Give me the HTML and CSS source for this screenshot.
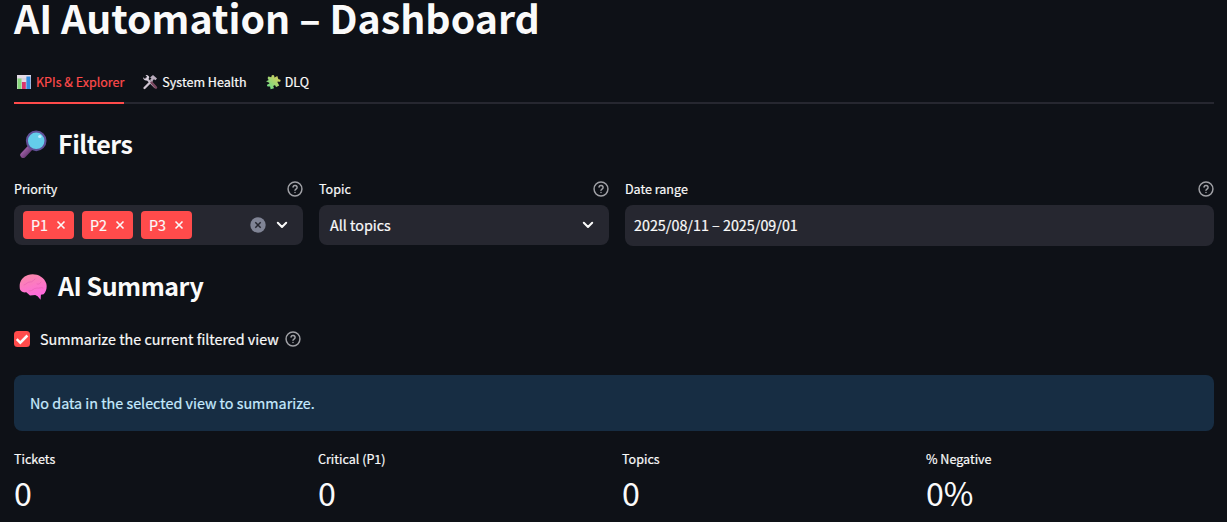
FILE: index.html
```html
<!DOCTYPE html>
<html lang="en">
<head>
<meta charset="utf-8">
<title>AI Automation – Dashboard</title>
<link rel="stylesheet" href="styles.css">
</head>
<body>
<svg width="0" height="0" class="defs">
  <defs>
    <linearGradient id="brain" x1="0" y1="0" x2="0.3" y2="1"><stop offset="0" stop-color="#f98ba5"/><stop offset="1" stop-color="#ff68e0"/></linearGradient>
    <linearGradient id="puzzle" x1="1" y1="0" x2="0" y2="1"><stop offset="0" stop-color="#e8cf58"/><stop offset="1" stop-color="#5edc8b"/></linearGradient>
    <linearGradient id="handle" x1="0" y1="0" x2="1" y2="1"><stop offset="0" stop-color="#a868b0"/><stop offset="1" stop-color="#60346c"/></linearGradient>
    <symbol id="help" viewBox="0 0 24 24"><g fill="none" stroke="currentColor" stroke-width="2.2" stroke-linecap="round" stroke-linejoin="round"><circle cx="12" cy="12" r="10.4"/><path d="M9 9a3.1 3.1 0 0 1 6.1 1c0 2-3 2.2-3.1 4M12 17.4h.01"/></g></symbol>
    <symbol id="chevron" viewBox="0 0 12 8"><path d="M1.8 1.8 6 6l4.2-4.2" fill="none" stroke="#fafafa" stroke-width="2" stroke-linecap="round" stroke-linejoin="round"/></symbol>
    <symbol id="cross" viewBox="0 0 10 10"><path d="M1.5 1.5l7 7M8.5 1.5l-7 7" fill="none" stroke="currentColor" stroke-width="1.6"/></symbol>
  </defs>
</svg>
<main class="page">
  <h1 class="title">AI Automation – Dashboard</h1>
  <nav class="tabs">
    <a class="tab active">
      <svg class="emoji" viewBox="0 0 16 16"><path fill="#e4dbe8" d="M1 1h14v14H1z"/><path stroke="#c5bccb" stroke-width=".6" d="M1 5h14M1 9h14"/><path fill="#86d77b" d="M1.500 4.500h4V15h-4z"/><path fill="#d9346e" d="M6 8h3.800v7H6z"/><path fill="#338de0" d="M10.400 2.500h4V15h-4z"/></svg>
      <span>KPIs &amp; Explorer</span>
    </a>
    <a class="tab">
      <svg class="emoji" viewBox="0 0 16 16"><path d="M4.500 4.500 13 13" stroke="#c8bdcc" stroke-width="2.400" stroke-linecap="round"/><path d="M1.300 3.200 3 4.900l1.800-.3.2-1.800L3.500 1.100c2-.6 4.100.8 3.700 3L5 6.400C3 7 .8 5.300 1.300 3.200z" fill="#d9d0dc"/><path d="M2.500 14 9.500 7" stroke="#d0c4d2" stroke-width="2.300" stroke-linecap="round"/><path d="M9.500 8.500 14 13.600" stroke="#79475f" stroke-width="2.500" stroke-linecap="round"/><path d="M8 3.600 11 1l4 3.600-1.500 1.700-1.600-1L10 7.500 8 6l1.500-1.800z" fill="#b9acbd"/></svg>
      <span>System Health</span>
    </a>
    <a class="tab">
      <svg class="emoji puzzle" viewBox="0 0 16 16"><path fill="url(#puzzle)" d="M3.600 2.600 6 3.300c.8.100.3-1 .7-1.700C7.300.600 9 .700 9.300 1.900c.2.700-.3 1.400.3 1.600L12.300 2l1 3c.2.800 1.900-.1 2.300 1.200.2 1.200-1 1.900-2 1.500-.9-.3-1.300.3-.9 1l1.500 2.800-2.900 1.400c-.8.200-.5-1.500-1.700-1.600-1.200 0-1.700 1.500-.8 2.200.4.400 0 .9-.5 1.100l-2.700.6-.5-2.500c-.2-.9-1.900.5-2.900-.7-.6-1.200.3-2.200 1.400-2.100.8 0 1-.5.600-1.100L1 7.300l2.400-1c.9-.4-.9-1-.7-2.200.1-.7.400-1.200.9-1.500z"/></svg>
      <span>DLQ</span>
    </a>
  </nav>

  <h2 class="heading filters-heading">
    <svg class="big-emoji" viewBox="0 0 28 28"><path d="M4.300 25 11 18" stroke="url(#handle)" stroke-width="6" stroke-linecap="round"/><circle cx="17.200" cy="10.800" r="9.300" fill="#64cdea" stroke="#605098" stroke-width="2.100"/><ellipse cx="20.800" cy="6.600" rx="1.700" ry="1.500" fill="#c4edff"/></svg>
    <span>Filters</span>
  </h2>
  <section class="filters">
    <div class="field">
      <div class="label"><span>Priority</span><svg class="help"><use href="#help"/></svg></div>
      <div class="control multi">
        <span class="tag"><span>P1</span><svg class="x"><use href="#cross"/></svg></span>
        <span class="tag"><span>P2</span><svg class="x"><use href="#cross"/></svg></span>
        <span class="tag"><span>P3</span><svg class="x"><use href="#cross"/></svg></span>
        <svg class="clear" viewBox="0 0 16 16"><circle cx="8" cy="8" r="7.700" fill="#808495"/><path d="M5.300 5.300l5.400 5.400M10.700 5.300l-5.400 5.400" stroke="#262730" stroke-width="1.500"/></svg>
        <svg class="chevron"><use href="#chevron"/></svg>
      </div>
    </div>
    <div class="field">
      <div class="label"><span>Topic</span><svg class="help"><use href="#help"/></svg></div>
      <div class="control select"><span>All topics</span><svg class="chevron"><use href="#chevron"/></svg></div>
    </div>
    <div class="field">
      <div class="label"><span>Date range</span><svg class="help"><use href="#help"/></svg></div>
      <div class="control date"><span>2025/08/11 – 2025/09/01</span></div>
    </div>
  </section>

  <h2 class="heading summary-heading">
    <svg class="big-emoji" viewBox="0 0 28 28"><path fill="url(#brain)" d="M.7 14C.2 8 4 3.700 9 2c7-2.300 16 1 18.300 8.500 1 4-.1 8.500-2.700 10.700l-2.700.5-.3 5-3-3.500-2.400-1.200-5.200.6-3.700-3.300C3.500 20 .5 18 .7 14z"/><path fill="none" stroke="#e55fb0" stroke-width=".8" stroke-opacity=".75" stroke-linecap="round" d="M5 12c3-1 3-3 6-3 3 .2 3-2 5-3M10 18c4 .5 4-3 8-3 3 .5 4-1 6 0M18 11c2 1 3-1 4-2"/></svg>
    <span>AI Summary</span>
  </h2>
  <label class="check">
    <svg class="box" viewBox="0 0 16 16"><rect width="16" height="16" rx="3.500" fill="#ff4b4b"/><path d="M2.700 8.200 6.300 11.700 13.400 4.500" fill="none" stroke="#fafafa" stroke-width="2.500"/></svg>
    <span>Summarize the current filtered view</span>
    <svg class="help"><use href="#help"/></svg>
  </label>
  <div class="alert"><span>No data in the selected view to summarize.</span></div>

  <section class="metrics">
    <div class="metric"><div class="name">Tickets</div><div class="value">0</div></div>
    <div class="metric"><div class="name">Critical (P1)</div><div class="value">0</div></div>
    <div class="metric"><div class="name">Topics</div><div class="value">0</div></div>
    <div class="metric"><div class="name">% Negative</div><div class="value">0%</div></div>
  </section>
</main>
</body>
</html>
```
FILE: styles.css
```css
* { box-sizing: border-box; }
html { background: #0e1117; }
body {
  margin: 0;
  height: 522px;
  overflow: hidden;
  background: #0e1117;
  color: #fafafa;
  font-family: "Noto Sans CJK SC", "Noto Sans", sans-serif;
  font-size: 14.33px;
  line-height: 20px;
  white-space: nowrap;
  -webkit-text-stroke: 0.2px currentColor;
}
.defs { display: block; width: 0; height: 0; }
svg { display: block; flex: none; }
.page {
  height: 522px;
  padding: 0 13px 0 14px;
}
.title {
  margin: 0;
  height: 64px;
  font-size: 39.3px;
  line-height: 34px;
  font-weight: 700;
  -webkit-text-stroke: 0;
}
.tabs {
  display: flex;
  gap: 16px;
  height: 40px;
  border-bottom: 2px solid #262730;
}
.tab {
  display: flex;
  align-items: center;
  gap: 4px;
  height: 40px;
  padding: 0 0 4px 2px;
  font-size: 12.54px;
}
.tab.active { color: #ff4b4b; border-bottom: 2px solid #ff4b4b; padding-bottom: 2px; }
.emoji { width: 16px; height: 16px; }
.heading {
  display: flex;
  align-items: center;
  gap: 11px;
  margin: 0;
  padding-left: 5px;
  font-size: 25px;
  line-height: 34px;
  font-weight: 600;
  letter-spacing: -0.48px;
  -webkit-text-stroke: 0;
}
.filters-heading { height: 34px; margin-top: 23px; }
.filters-heading span { padding-bottom: 2px; }
.summary-heading { height: 34px; margin-top: 24px; }
.summary-heading span { padding-bottom: 4px; }
.big-emoji { width: 28px; height: 28px; }
.filters {
  display: grid;
  grid-template-columns: 289px 290px 589px;
  gap: 16px;
  align-items: start;
  height: 65px;
  margin-top: 20px;
}
.label {
  display: flex;
  align-items: center;
  justify-content: space-between;
  height: 16px;
  margin-bottom: 8px;
  font-size: 12.54px;
}
.help { width: 16px; height: 16px; color: #a0a1a6; }
.control {
  display: flex;
  align-items: center;
  height: 40px;
  border-radius: 8px;
  background: #262730;
}
.multi { gap: 8px; padding: 0 15px 0 9px; }
.tag {
  display: flex;
  align-items: center;
  justify-content: space-between;
  width: 51px;
  height: 28px;
  padding: 0 8px;
  border-radius: 4px;
  background: #ff4b4b;
}
.x { width: 10px; height: 10px; }
.clear { width: 16px; height: 16px; margin-left: auto; }
.chevron { width: 12px; height: 8px; margin-left: 2px; }
.select { padding: 0 15px 0 11px; justify-content: space-between; }
.date { height: 41px; padding: 0 9px 1px; }
.check {
  display: flex;
  align-items: center;
  height: 24px;
  margin-top: 23px;
}
.box { width: 16px; height: 16px; margin-right: 10px; }
.check .help { margin-left: 6px; }
.alert {
  display: flex;
  align-items: center;
  height: 56px;
  margin-top: 24px;
  padding-left: 16px;
  border-radius: 8px;
  background: #172d43;
  color: #c7ebff;
}
.metrics {
  display: grid;
  grid-template-columns: repeat(4, 1fr);
  gap: 16px;
  margin-top: 18px;
}
.name { font-size: 12.54px; height: 20px; }
.value { font-size: 32.2px; line-height: 46px; height: 46px; -webkit-text-stroke: 0; }
```
